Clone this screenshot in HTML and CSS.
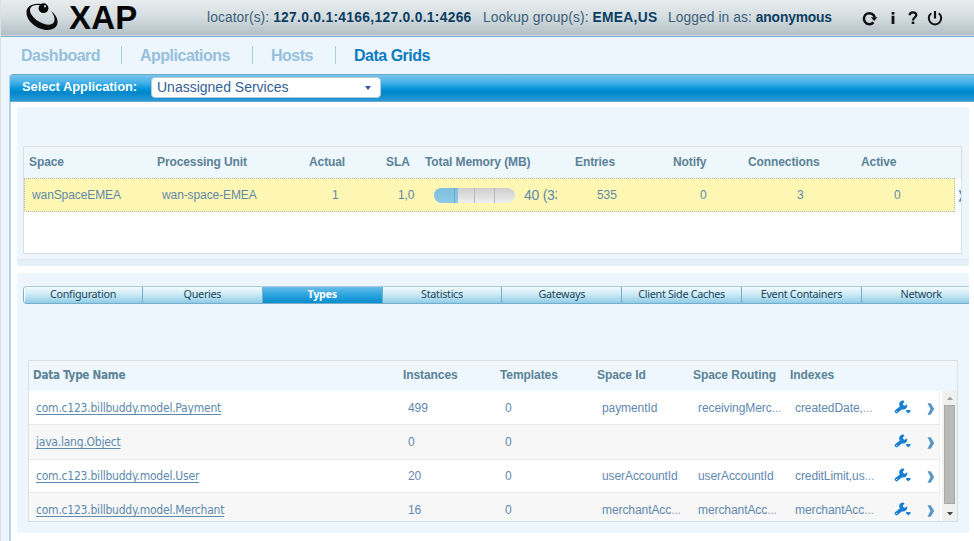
FILE: index.html
```html
<!DOCTYPE html>
<html lang="en">
<head>
<meta charset="utf-8">
<title>XAP</title>
<link rel="stylesheet" href="styles.css">
</head>
<body>
<svg class="defs" width="0" height="0">
  <symbol id="wrench" viewBox="0 0 18 15"><path d="M2.600 11.400 7.500 7.400" stroke="#1780d4" stroke-width="3.800" stroke-linecap="round"/><path d="M9.600 .6C6.500 .4 4.600 2.800 5.300 5.600L8 9.400C11.600 9.900 13.700 7.600 13.200 4.200L10.900 5.700 9.200 5.100 8.900 3.200 10.500 2Z" fill="#1780d4"/><circle cx="2.600" cy="11.500" r=".6" fill="#fff"/><path d="M12.200 9.900h4.200v1.400l-2.100 2.100-2.100-2.100Z" fill="#1780d4"/></symbol>
  <symbol id="chevron" viewBox="0 0 8 12"><path d="M.5.200H3.800L7.200 6 3.800 11.800H.5L3.400 6Z" fill="#5b97c4"/></symbol>
</svg>
<div class="app">
  <header class="top">
    <svg class="planet" viewBox="0 0 34 28" width="34" height="28"><path fill-rule="evenodd" fill="#0a0a0a" d="M16 1C7 0 1 3.500 1.500 10.500 2 18 12 27 22.500 27 29 27 33 23.500 32.500 18 32 14 29.500 10.500 26 8 29 12 30.500 15.500 29 19 27.500 22 23 22.500 18 20.500 10 17.500 4.500 11 5 6.500 5.500 2.500 10 1.500 16 2Z"/><circle cx="18.500" cy="5.200" r="4.900" fill="#0a0a0a"/><circle cx="20" cy="3.300" r="1.100" fill="#e3e9eb"/></svg>
    <span class="brand">XAP</span>
    <div class="info">
      <span class="loc">locator(s): <b>127.0.0.1:4166,127.0.0.1:4266</b></span>
      <span class="group">Lookup group(s): <b>EMEA,US</b></span>
      <span class="user">Logged in as: <b>anonymous</b></span>
    </div>
    <div class="actions">
      <svg width="16" height="16" viewBox="0 0 16 16"><path d="M11.500 12.400A5.500 5.500 0 1 1 12.800 7.500" fill="none" stroke="#111" stroke-width="2.500"/><path d="M8.800 7.200H15.500L12.200 11Z" fill="#111"/></svg>
      <svg width="6" height="16" viewBox="0 0 6 16"><path d="M1.600 2h2.800v2.400H1.600ZM1.600 5.700h2.800V14H1.600Z" fill="#111"/></svg>
      <svg width="10" height="16" viewBox="0 0 10 16"><path d="M1.700 5.300C1.700 1.400 8.300 1.400 8.300 5.100 8.300 7.500 5 7.200 5 10.500" fill="none" stroke="#111" stroke-width="2.300"/><path d="M3.700 11.600h2.600V14H3.700Z" fill="#111"/></svg>
      <svg width="16" height="16" viewBox="0 0 16 16"><path d="M4.300 3.300a6.200 6.200 0 1 0 7.400 0" fill="none" stroke="#111" stroke-width="2"/><path d="M8 1V8.500" stroke="#111" stroke-width="2.200"/></svg>
    </div>
  </header>
  <nav class="nav">
    <a class="n1">Dashboard</a><a class="n2">Applications</a><a class="n3">Hosts</a><a class="n4 on">Data Grids</a>
  </nav>
  <main class="main">
    <div class="bar">
      <span class="label">Select Application:</span>
      <div class="select"><span>Unassigned Services</span><svg width="6" height="4" viewBox="0 0 6 4"><path d="M0 0H6L3 4Z" fill="#3c55a5"/></svg></div>
    </div>
    <section class="panel spaces">
      <div class="box">
        <div class="shead"><span>Space</span><span>Processing Unit</span><span>Actual</span><span>SLA</span><span>Total Memory (MB)</span><span>Entries</span><span>Notify</span><span>Connections</span><span>Active</span></div>
        <div class="srowwrap">
          <div class="srow"><span>wanSpaceEMEA</span><span>wan-space-EMEA</span><span>1</span><span>1,0</span><span class="meter"><i></i></span><span class="mem">40 (33%)</span><span>535</span><span>0</span><span>3</span><span>0</span></div>
          <svg class="more" width="8" height="12"><use href="#chevron"/></svg>
        </div>
      </div>
    </section>
    <section class="panel types">
      <div class="tabs"><i class="cap"></i><a>Configuration</a><a>Queries</a><a class="on">Types</a><a>Statistics</a><a>Gateways</a><a>Client Side Caches</a><a>Event Containers</a><a>Network</a></div>
      <div class="tbox">
        <div class="trow thead"><span>Data Type Name</span><span>Instances</span><span>Templates</span><span>Space Id</span><span>Space Routing</span><span>Indexes</span></div>
        <div class="tbody">
          <div class="rows">
            <div class="trow"><a>com.c123.billbuddy.model.Payment</a><span>499</span><span>0</span><span>paymentId</span><span>receivingMerc<em>...</em></span><span>createdDate,<em>...</em></span><svg class="w" width="18" height="15"><use href="#wrench"/></svg><svg class="c" width="8" height="12"><use href="#chevron"/></svg></div>
            <div class="trow alt"><a>java.lang.Object</a><span>0</span><span>0</span><span></span><span></span><span></span><svg class="w" width="18" height="15"><use href="#wrench"/></svg><svg class="c" width="8" height="12"><use href="#chevron"/></svg></div>
            <div class="trow"><a>com.c123.billbuddy.model.User</a><span>20</span><span>0</span><span>userAccountId</span><span>userAccountId</span><span>creditLimit,us<em>...</em></span><svg class="w" width="18" height="15"><use href="#wrench"/></svg><svg class="c" width="8" height="12"><use href="#chevron"/></svg></div>
            <div class="trow alt"><a>com.c123.billbuddy.model.Merchant</a><span>16</span><span>0</span><span>merchantAcc<em>...</em></span><span>merchantAcc<em>...</em></span><span>merchantAcc<em>...</em></span><svg class="w" width="18" height="15"><use href="#wrench"/></svg><svg class="c" width="8" height="12"><use href="#chevron"/></svg></div>
          </div>
          <div class="scroll"><svg width="14" height="14" viewBox="0 0 14 14"><path d="M4 9H10L7 5.500Z" fill="#a3a3a3"/></svg><i></i><svg width="14" height="14" viewBox="0 0 14 14"><path d="M4 5H10L7 8.500Z" fill="#444"/></svg></div>
        </div>
      </div>
    </section>
  </main>
</div>
</body>
</html>
```
FILE: styles.css
```css
* { box-sizing: border-box; }
body { margin: 0; width: 974px; height: 541px; overflow: hidden; background: #edf6fd; font-family: "Liberation Sans", Arial, sans-serif; white-space: nowrap; }
.defs { position: absolute; }
.app { display: flex; flex-direction: column; height: 541px; border-left: 1px solid #dedede; }
.top { display: flex; flex: 0 0 37px; background: linear-gradient(#e8ecee, #d6dee1 45%, #b0bfc6); border-bottom: 1px solid #83b0d1; box-shadow: inset 0 -1px #cbd6dc; overflow: hidden; }
.planet { margin: 3px 0 0 24px; flex: none; }
.brand { width: 138px; margin-left: 10px; font-size: 33px; font-weight: 700; line-height: 35px; color: #050505; letter-spacing: .2px; }
.info { display: flex; flex: 0 0 655px; font-size: 13.800px; line-height: 36px; color: #3c6079; letter-spacing: .08px; }
.info b { color: #0b3d61; }
.loc { flex: 0 0 276px; }
.loc b { letter-spacing: .31px; }
.group { flex: 0 0 185px; }
.group b { letter-spacing: .3px; }
.user b { letter-spacing: -.15px; }
.actions { display: flex; align-items: center; }
.actions svg:nth-child(2) { margin-left: 12px; }
.actions svg:nth-child(3) { margin-left: 12px; }
.actions svg:nth-child(4) { margin-left: 9px; }
.nav { display: flex; align-items: center; flex: 0 0 37px; padding-left: 20px; padding-bottom: 2px; font-size: 16px; letter-spacing: -.5px; font-weight: 700; color: #97c0dc; }
.nav a { height: 18px; line-height: 19px; }
.n1 { width: 100px; }
.n2 { width: 131px; }
.n3 { width: 83px; }
.nav .n2, .nav .n3, .nav .n4 { border-left: 1px solid #a9cde3; padding-left: 18px; }
.nav .on { color: #0d7abf; }
.main { flex: 1; margin-left: 8px; background: #fff; border-left: 2px solid #b5d3e8; border-top-left-radius: 4px; }
.bar { display: flex; align-items: center; height: 28px; margin-left: -1px; padding-left: 12px; border: 1px solid #69a9d0; border-width: 1px 0; border-top-left-radius: 4px; background: linear-gradient(#78c4ed, #48b1e8 28%, #0796dc 52%, #0085ca 66%, #2b9cd7); }
.label { width: 130px; margin-top: -4px; font-size: 12.850px; font-weight: 700; color: #fff; }
.select { display: flex; align-items: center; justify-content: space-between; width: 230px; height: 21px; margin: -1px 0 0 -1px; padding: 0 9px 2px 5px; background: #fff; border: 1px solid #b5cad9; border-radius: 4px; font-size: 14px; color: #316196; }
.select svg { margin-top: 2px; }
.panel { width: 952px; margin-left: 6px; background: #edf6fd; border-radius: 2px; }
.spaces { height: 159px; margin-top: 5px; padding: 39px 7px 0 6px; border-bottom: 6px solid #e4f0f8; box-shadow: inset 0 -1px #dbe9f2; }
.box { height: 108px; border: 1px solid #d9dfe2; background: #fff; font-size: 12px; letter-spacing: -.1px; }
.shead { display: grid; grid-template-columns: 128px 152px 77px 39px 150px 98px 75px 113px 60px; height: 31px; padding-left: 5px; line-height: 31px; background: #eef7fc; font-weight: 700; color: #5b8297; }
.srowwrap { display: flex; height: 34px; overflow: hidden; }
.srow { flex: 0 0 931px; display: grid; grid-template-columns: 130px 170px 66px 36px 90px 33px 40px 103px 97px 97px 50px; align-items: center; padding-left: 7px; background: #fef7b3; border: 1px dotted #a9bcc5; color: #6288a8; height: 34px; }
.srow span:nth-child(7) { grid-column: 8; }
.more { flex: none; margin: 12px 0 0 3px; }
.meter { display: flex; width: 81px; height: 15px; border-radius: 8px; overflow: hidden; background: linear-gradient(90deg, transparent 20px, #b9b9b9 20px 21px, transparent 21px 40px, #b9b9b9 40px 41px, transparent 41px 60px, #b9b9b9 60px 61px, transparent 61px), linear-gradient(#cdcdcd, #efefef); }
.meter i { width: 24px; background: linear-gradient(90deg, transparent 20px, #65aacb 20px 21px, transparent 21px), linear-gradient(#7ebfdd, #8bcbe7); }
.mem { font-size: 14px; letter-spacing: -.25px; overflow: hidden; }
.types { height: 260px; margin-top: 7px; padding: 13px 0 0 6px; }
.tabs { display: flex; height: 18px; border: 1px solid #8eb6cd; border-color: #adcbdd #0000 #75aecb #82afcb; border-right: 0; border-radius: 4px 0 0 4px; overflow: hidden; font-family: "Noto Sans", "Open Sans", sans-serif; font-size: 10.800px; letter-spacing: -.3px; line-height: 14px; text-align: center; color: #1f465e; background: linear-gradient(#f3fbfe, #c8e9f5 50%, #8fcde6); }
.tabs a { flex: 0 0 119.800px; border-right: 1px solid #75aecb; }
.tabs .cap + a { flex-basis: 119px; }
.tabs .on { color: #fff; font-weight: 700; background: linear-gradient(#69bde9, #2ca4df 50%, #078dcd); }
.cap { flex: 0 0 1px; margin-right: -1px; border-right: 1px solid #fff; }
.tbox { width: 930px; height: 162px; margin: 56px 0 0 5px; border: 1px solid #d9dfe2; font-size: 12px; background: #fff; overflow: hidden; }
.trow { display: grid; grid-template-columns: 372px 97px 97px 96px 97px 99px 32px 10px; align-items: center; height: 33px; padding-left: 7px; color: #6288b0; border-bottom: 1px solid #e9ebec; border-right: 1px solid #eee; }
.trow span { letter-spacing: -.08px; }
.trow a { font-family: "DejaVu Sans Condensed", "Noto Sans", sans-serif; font-size: 12px; letter-spacing: -.22px; color: #5d8aad; text-decoration: underline; text-underline-offset: 2px; }
.trow.thead { grid-template-columns: 370px 97px 97px 96px 97px 80px; height: 30px; padding-left: 4px; padding-bottom: 2px; border: 0; font-weight: 700; background: #edf7fd; color: #5b8297; }
.thead span:first-child { font-family: "DejaVu Sans Condensed", "Noto Sans", sans-serif; font-size: 11.600px; letter-spacing: -.25px; }
.trow.alt { height: 35px; background: #f7f7f7; }
.trow em { font-style: normal; letter-spacing: -.1px; color: #8ba6c2; }
.w { margin-top: -2px; }
.c { margin: 2px 0 0 1px; }
.tbody { display: flex; height: 131px; justify-content: space-between; overflow: hidden; }
.rows { width: 911px; padding-top: 1px; }
.scroll { display: flex; flex-direction: column; width: 15px; padding-left: 1px; background: #f0f0f0; }
.scroll i { height: 99px; margin-left: 1px; width: 11px; background: #bababa; border: 1px solid #aaa; }
.scroll svg:last-child { margin-top: 3px; }
```
